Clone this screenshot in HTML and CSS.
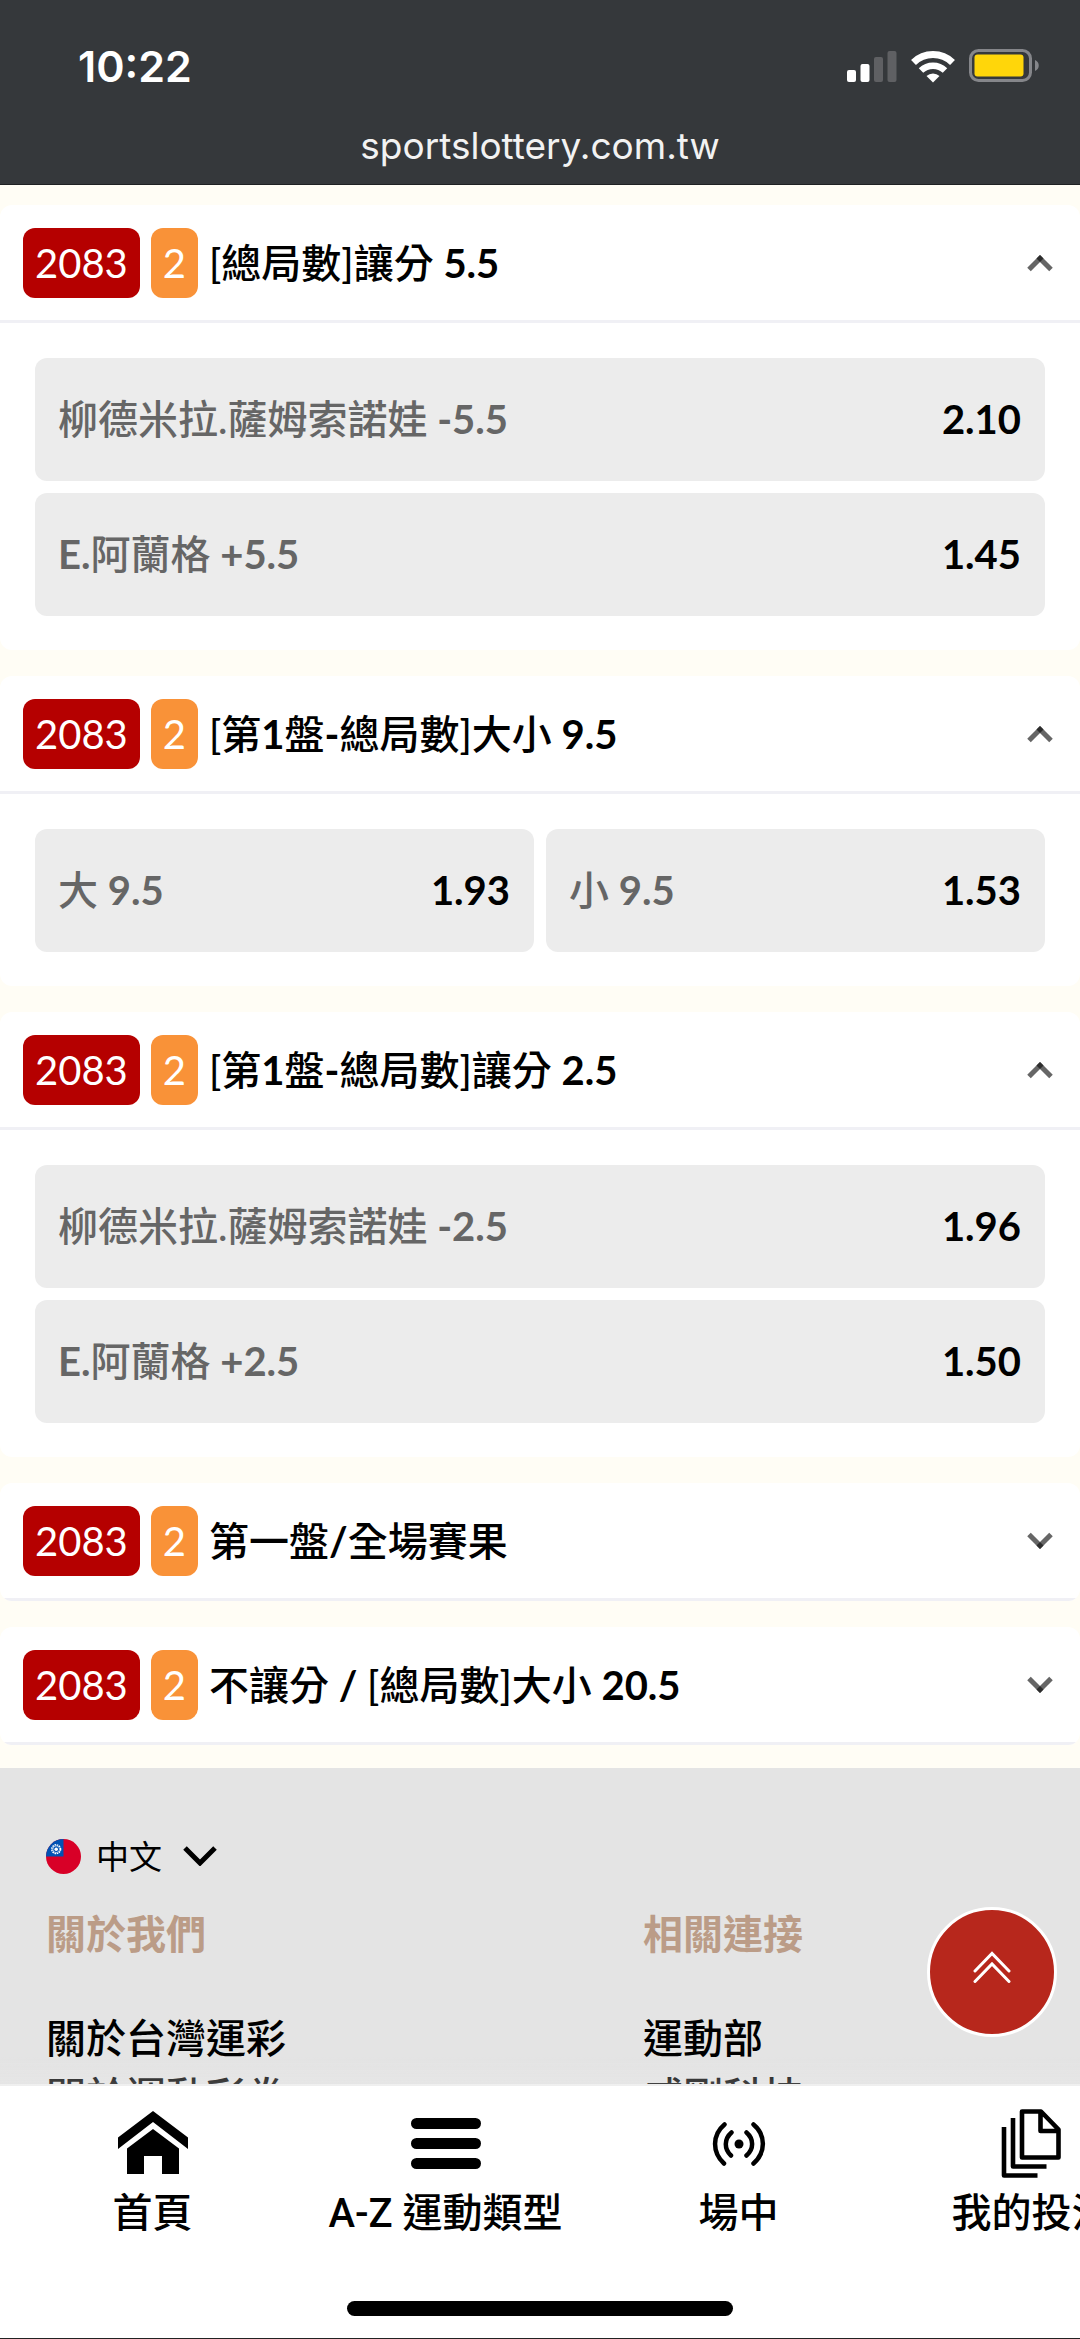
FILE: index.html
```html
<!DOCTYPE html>
<html lang="zh-Hant-TW">
<head>
<meta charset="utf-8">
<meta name="viewport" content="width=device-width, initial-scale=1">
<title>台灣運彩</title>
<link rel="stylesheet" href="styles.css">
</head>
<body>
<svg class="sprite" aria-hidden="true">
  <symbol id="caret" viewBox="0 0 28 20"><path d="M3 16.500 14 5.500 25 16.500" fill="none" stroke="#666" stroke-width="5"/><path d="M10.500 5.500 14 2 17.500 5.500 14 9z" fill="#2c2c2c"/></symbol>
</svg>

<header class="browser-bar">
  <div class="status">
    <time class="clock">10:22</time>
    <div class="status-icons">
      <svg class="signal" viewBox="0 0 50 32" aria-hidden="true">
        <rect x="0" y="20" width="9" height="12" rx="2" fill="#fff"/>
        <rect x="13.500" y="14" width="9" height="18" rx="2" fill="#fff"/>
        <rect x="27" y="7" width="9" height="25" rx="2" fill="#5f6063"/>
        <rect x="40.500" y="1" width="9" height="31" rx="2" fill="#5f6063"/>
      </svg>
      <svg class="wifi" viewBox="0 0 44 33" aria-hidden="true" fill="none" stroke="#fff">
        <path d="M2.500 12.500a28 28 0 0 1 39 0" stroke-width="7"/>
        <path d="M10 20.500a17.500 17.500 0 0 1 24 0" stroke-width="6.500"/>
        <path d="M22 32.500 15.500 26a9.500 9.500 0 0 1 13 0z" fill="#fff" stroke="none"/>
      </svg>
      <svg class="battery" viewBox="0 0 71 34" aria-hidden="true">
        <rect x="1.500" y="1.500" width="60" height="30" rx="8" fill="none" stroke="#85868a" stroke-width="3"/>
        <rect x="5.500" y="5.500" width="49" height="22" rx="3" fill="#ffd60a"/>
        <path d="M66 11c5 2 5 9 0 11z" fill="#85868a"/>
      </svg>
    </div>
  </div>
  <div class="address">sportslottery.com.tw</div>
</header>

<main class="scroller">
  <div class="markets">
    <section class="market">
      <h2><button class="market-head" type="button" aria-expanded="true"><span class="badge">2083</span><span class="badge badge-count">2</span><span class="market-title">[總局數]讓分<b> 5.5</b></span><svg class="caret" aria-hidden="true"><use href="#caret"/></svg></button></h2>
      <div class="odds">
        <button class="odd" type="button"><span class="name">柳德米拉.薩姆索諾娃<b> -5.5</b></span><span class="price">2.10</span></button>
        <button class="odd" type="button"><span class="name"><b>E.</b>阿蘭格<b> +5.5</b></span><span class="price">1.45</span></button>
      </div>
    </section>
    <section class="market">
      <h2><button class="market-head" type="button" aria-expanded="true"><span class="badge">2083</span><span class="badge badge-count">2</span><span class="market-title">[第<b>1</b>盤<b>-</b>總局數]大小<b> 9.5</b></span><svg class="caret" aria-hidden="true"><use href="#caret"/></svg></button></h2>
      <div class="odds odds-pair">
        <button class="odd" type="button"><span class="name">大<b> 9.5</b></span><span class="price">1.93</span></button>
        <button class="odd" type="button"><span class="name">小<b> 9.5</b></span><span class="price">1.53</span></button>
      </div>
    </section>
    <section class="market">
      <h2><button class="market-head" type="button" aria-expanded="true"><span class="badge">2083</span><span class="badge badge-count">2</span><span class="market-title">[第<b>1</b>盤<b>-</b>總局數]讓分<b> 2.5</b></span><svg class="caret" aria-hidden="true"><use href="#caret"/></svg></button></h2>
      <div class="odds">
        <button class="odd" type="button"><span class="name">柳德米拉.薩姆索諾娃<b> -2.5</b></span><span class="price">1.96</span></button>
        <button class="odd" type="button"><span class="name"><b>E.</b>阿蘭格<b> +2.5</b></span><span class="price">1.50</span></button>
      </div>
    </section>
    <section class="market">
      <h2><button class="market-head" type="button" aria-expanded="false"><span class="badge">2083</span><span class="badge badge-count">2</span><span class="market-title">第一盤<b>/</b>全場賽果</span><svg class="caret caret-down" aria-hidden="true"><use href="#caret"/></svg></button></h2>
    </section>
    <section class="market">
      <h2><button class="market-head" type="button" aria-expanded="false"><span class="badge">2083</span><span class="badge badge-count">2</span><span class="market-title">不讓分<b> / </b>[總局數]大小<b> 20.5</b></span><svg class="caret caret-down" aria-hidden="true"><use href="#caret"/></svg></button></h2>
    </section>
  </div>

  <footer class="site-footer">
    <div class="language">
      <svg class="flag" viewBox="0 0 36 36" aria-hidden="true">
        <circle cx="18" cy="18" r="18" fill="#d80027"/>
        <path d="M18 0A18 18 0 0 0 0 18h18z" fill="#0052b4"/>
        <circle cx="10.500" cy="10.500" r="4.500" fill="none" stroke="#fff" stroke-width="1.500" stroke-dasharray="1.600 .756"/>
        <circle cx="10.500" cy="10.500" r="3.500" fill="none" stroke="#cfdcf0" stroke-width=".8"/>
        <circle cx="10.500" cy="10.500" r="1.800" fill="#fff"/>
      </svg>
      <select class="language-select" aria-label="語言"><option>中文</option></select>
      <svg class="language-arrow" viewBox="0 0 34 20" aria-hidden="true"><path d="M2 2 17 17 32 2" fill="none" stroke="#000" stroke-width="5"/></svg>
    </div>
    <div class="link-columns">
      <nav class="link-column">
        <h3>關於我們</h3>
        <a href="#about">關於台灣運彩</a>
        <a href="#ticket">關於運動彩券</a>
      </nav>
      <nav class="link-column">
        <h3>相關連接</h3>
        <a href="#sports">運動部</a>
        <a href="#adata">威剛科技</a>
      </nav>
    </div>
  </footer>
</main>

<div class="dock">
  <button class="to-top" type="button" aria-label="回到頂端">
    <svg viewBox="0 0 38 32" aria-hidden="true"><path d="M2 20 19 2.500 36 20M2 30.500 19 13 36 30.500" fill="none" stroke="#fff" stroke-width="3" stroke-linecap="round"/></svg>
  </button>
  <nav class="tabs">
    <a class="tab" href="#home">
      <svg viewBox="0 0 70 70" aria-hidden="true"><path d="M35 2 70 28.500V40L35 13 0 40V28.500z"/><path d="M35 20 61 39.500V65H44V47H26V65H9V39.500z"/></svg>
      <span>首頁</span>
    </a>
    <a class="tab" href="#sports-az">
      <svg viewBox="0 0 70 70" aria-hidden="true"><rect x="0" y="9" width="70" height="11" rx="5.500"/><rect x="0" y="29" width="70" height="11" rx="5.500"/><rect x="0" y="49" width="70" height="11" rx="5.500"/></svg>
      <span>A-Z 運動類型</span>
    </a>
    <a class="tab" href="#live">
      <svg viewBox="0 0 70 70" aria-hidden="true"><circle cx="35" cy="35" r="4.500"/><g fill="none" stroke="#000" stroke-width="4.500" stroke-linecap="round"><path d="M20.500 15.500C8 26 8 43.500 20 54.500M49.500 15.500C62 26 62 43.500 49.500 54.500M27.500 23.500C20 30 20 40 27 46.500M42.500 23.500C50 30 50 40 42.500 46.500"/></g></svg>
      <span>場中</span>
    </a>
    <a class="tab" href="#bets">
      <svg viewBox="0 0 70 70" aria-hidden="true"><g fill="none" stroke="#000" stroke-width="4.600" stroke-linejoin="round"><path d="M25 2.500H44L61.500 20.500V48.500H25zM43.500 3V22H61"/><path d="M16 9V57.500H49.500"/><path d="M7 18V66.500H40.500"/></g></svg>
      <span>我的投注</span>
    </a>
  </nav>
  <div class="home-indicator"></div>
</div>
</body>
</html>
```

FILE: styles.css
```css
* {
  box-sizing: border-box;
}

body {
  margin: 0;
  height: 100vh;
  display: flex;
  flex-direction: column;
  overflow: hidden;
  background: #fff;
  color: #000;
  font-family: Lato, "Noto Sans CJK TC", sans-serif;
  font-size: 40px;
  line-height: 58px;
}

h2,
h3 {
  margin: 0;
  font: inherit;
}

button,
select {
  margin: 0;
  border: 0;
  padding: 0;
  background: none;
  color: inherit;
  font: inherit;
}

a {
  color: inherit;
  text-decoration: none;
}

svg {
  display: block;
  flex: none;
}

.sprite {
  position: absolute;
  width: 0;
  height: 0;
}

/* Browser chrome */
.browser-bar {
  flex: none;
  padding: 36px 40px 9px 78px;
  border-bottom: 1px solid #1f2123;
  background: #35383b;
  color: #fff;
  font-family: Inter, "Liberation Sans", sans-serif;
}

.status {
  display: flex;
  align-items: center;
  justify-content: space-between;
  height: 60px;
}

.clock {
  font-size: 43px;
  font-weight: 600;
}

.status-icons {
  display: flex;
  align-items: center;
  gap: 14px;
}

.signal {
  width: 50px;
  height: 32px;
}

.wifi {
  width: 44px;
  height: 33px;
}

.battery {
  width: 71px;
  height: 34px;
}

.address {
  margin: 21px 0 0 -38px;
  color: #f2f2f2;
  font-size: 37px;
  text-align: center;
}

/* Scrolling content */
.scroller {
  flex: 1;
  min-height: 0;
  overflow-y: auto;
  scrollbar-width: none;
  background: #e4e4e4;
}

.markets {
  display: flex;
  flex-direction: column;
  gap: 26px;
  padding: 20px 0 23px;
  background: #fffdf5;
}

.market {
  border-radius: 12px;
  background: #fff;
  overflow: hidden;
}

.market-head {
  display: flex;
  align-items: center;
  gap: 11px;
  width: 100%;
  height: 118px;
  padding: 0 26px 0 23px;
  border-bottom: 3px solid #f0f0f5;
  font-weight: 500;
  text-align: left;
}

.badge {
  padding: 6px 12px;
  border-radius: 12px;
  background: #b50000;
  color: #fff;
  font-weight: 400;
  text-align: center;
}

.badge-count {
  background: #f99238;
}

.market-title {
  flex: 1;
}

.caret {
  width: 28px;
  height: 20px;
}

.caret-down {
  transform: rotate(180deg);
}

.odds {
  display: grid;
  gap: 12px;
  padding: 35px 35px 34px;
}

.odds-pair {
  grid-template-columns: 1fr 1fr;
}

.odd {
  display: flex;
  align-items: center;
  justify-content: space-between;
  height: 123px;
  padding: 0 24px 2px 23px;
  border-radius: 12px;
  background: #ececec;
}

.name {
  color: #666;
  font-weight: 500;
}

.price {
  font-weight: 700;
}

/* Site footer */
.site-footer {
  padding: 59px 46px 58px;
}

.language {
  display: flex;
  align-items: center;
  height: 58px;
}

.flag {
  width: 35px;
  height: 35px;
}

.language-select {
  appearance: none;
  width: 68px;
  margin: 0 19px 0 15px;
  font-size: 33px;
}

.language-arrow {
  width: 34px;
  height: 20px;
}

.link-columns {
  display: grid;
  grid-template-columns: 597px 1fr;
  margin-top: 20px;
}

.link-column {
  display: flex;
  flex-direction: column;
  font-weight: 500;
}

.link-column h3 {
  margin-bottom: 46px;
  color: #bb9c87;
  font-weight: 700;
}

/* Bottom dock */
.dock {
  position: relative;
  flex: none;
  border-top: 2px solid #f1f1f1;
  border-bottom: 1px solid #222;
  background: #fff;
}

.dock::before {
  content: "";
  position: absolute;
  right: 0;
  bottom: 100%;
  left: 0;
  height: 30px;
  background: linear-gradient(rgba(235, 235, 235, 0), rgba(235, 235, 235, .3));
}

.to-top {
  position: absolute;
  right: 23px;
  bottom: calc(100% + 49px);
  display: grid;
  place-items: center;
  width: 130px;
  height: 130px;
  padding-bottom: 10px;
  border: 3px solid #fff;
  border-radius: 50%;
  background: #b7271c;
}

.to-top svg {
  width: 38px;
  height: 32px;
}

.tabs {
  display: flex;
  padding: 23px 0 0 6px;
  overflow: hidden;
}

.tab {
  flex: 0 0 293px;
  display: flex;
  flex-direction: column;
  align-items: center;
  gap: 6px;
  font-family: Roboto, "Noto Sans CJK TC", sans-serif;
  font-weight: 500;
}

.tab svg {
  width: 70px;
  height: 70px;
}

.home-indicator {
  width: 386px;
  height: 15px;
  margin: 58px auto 22px;
  border-radius: 8px;
  background: #000;
}
```
